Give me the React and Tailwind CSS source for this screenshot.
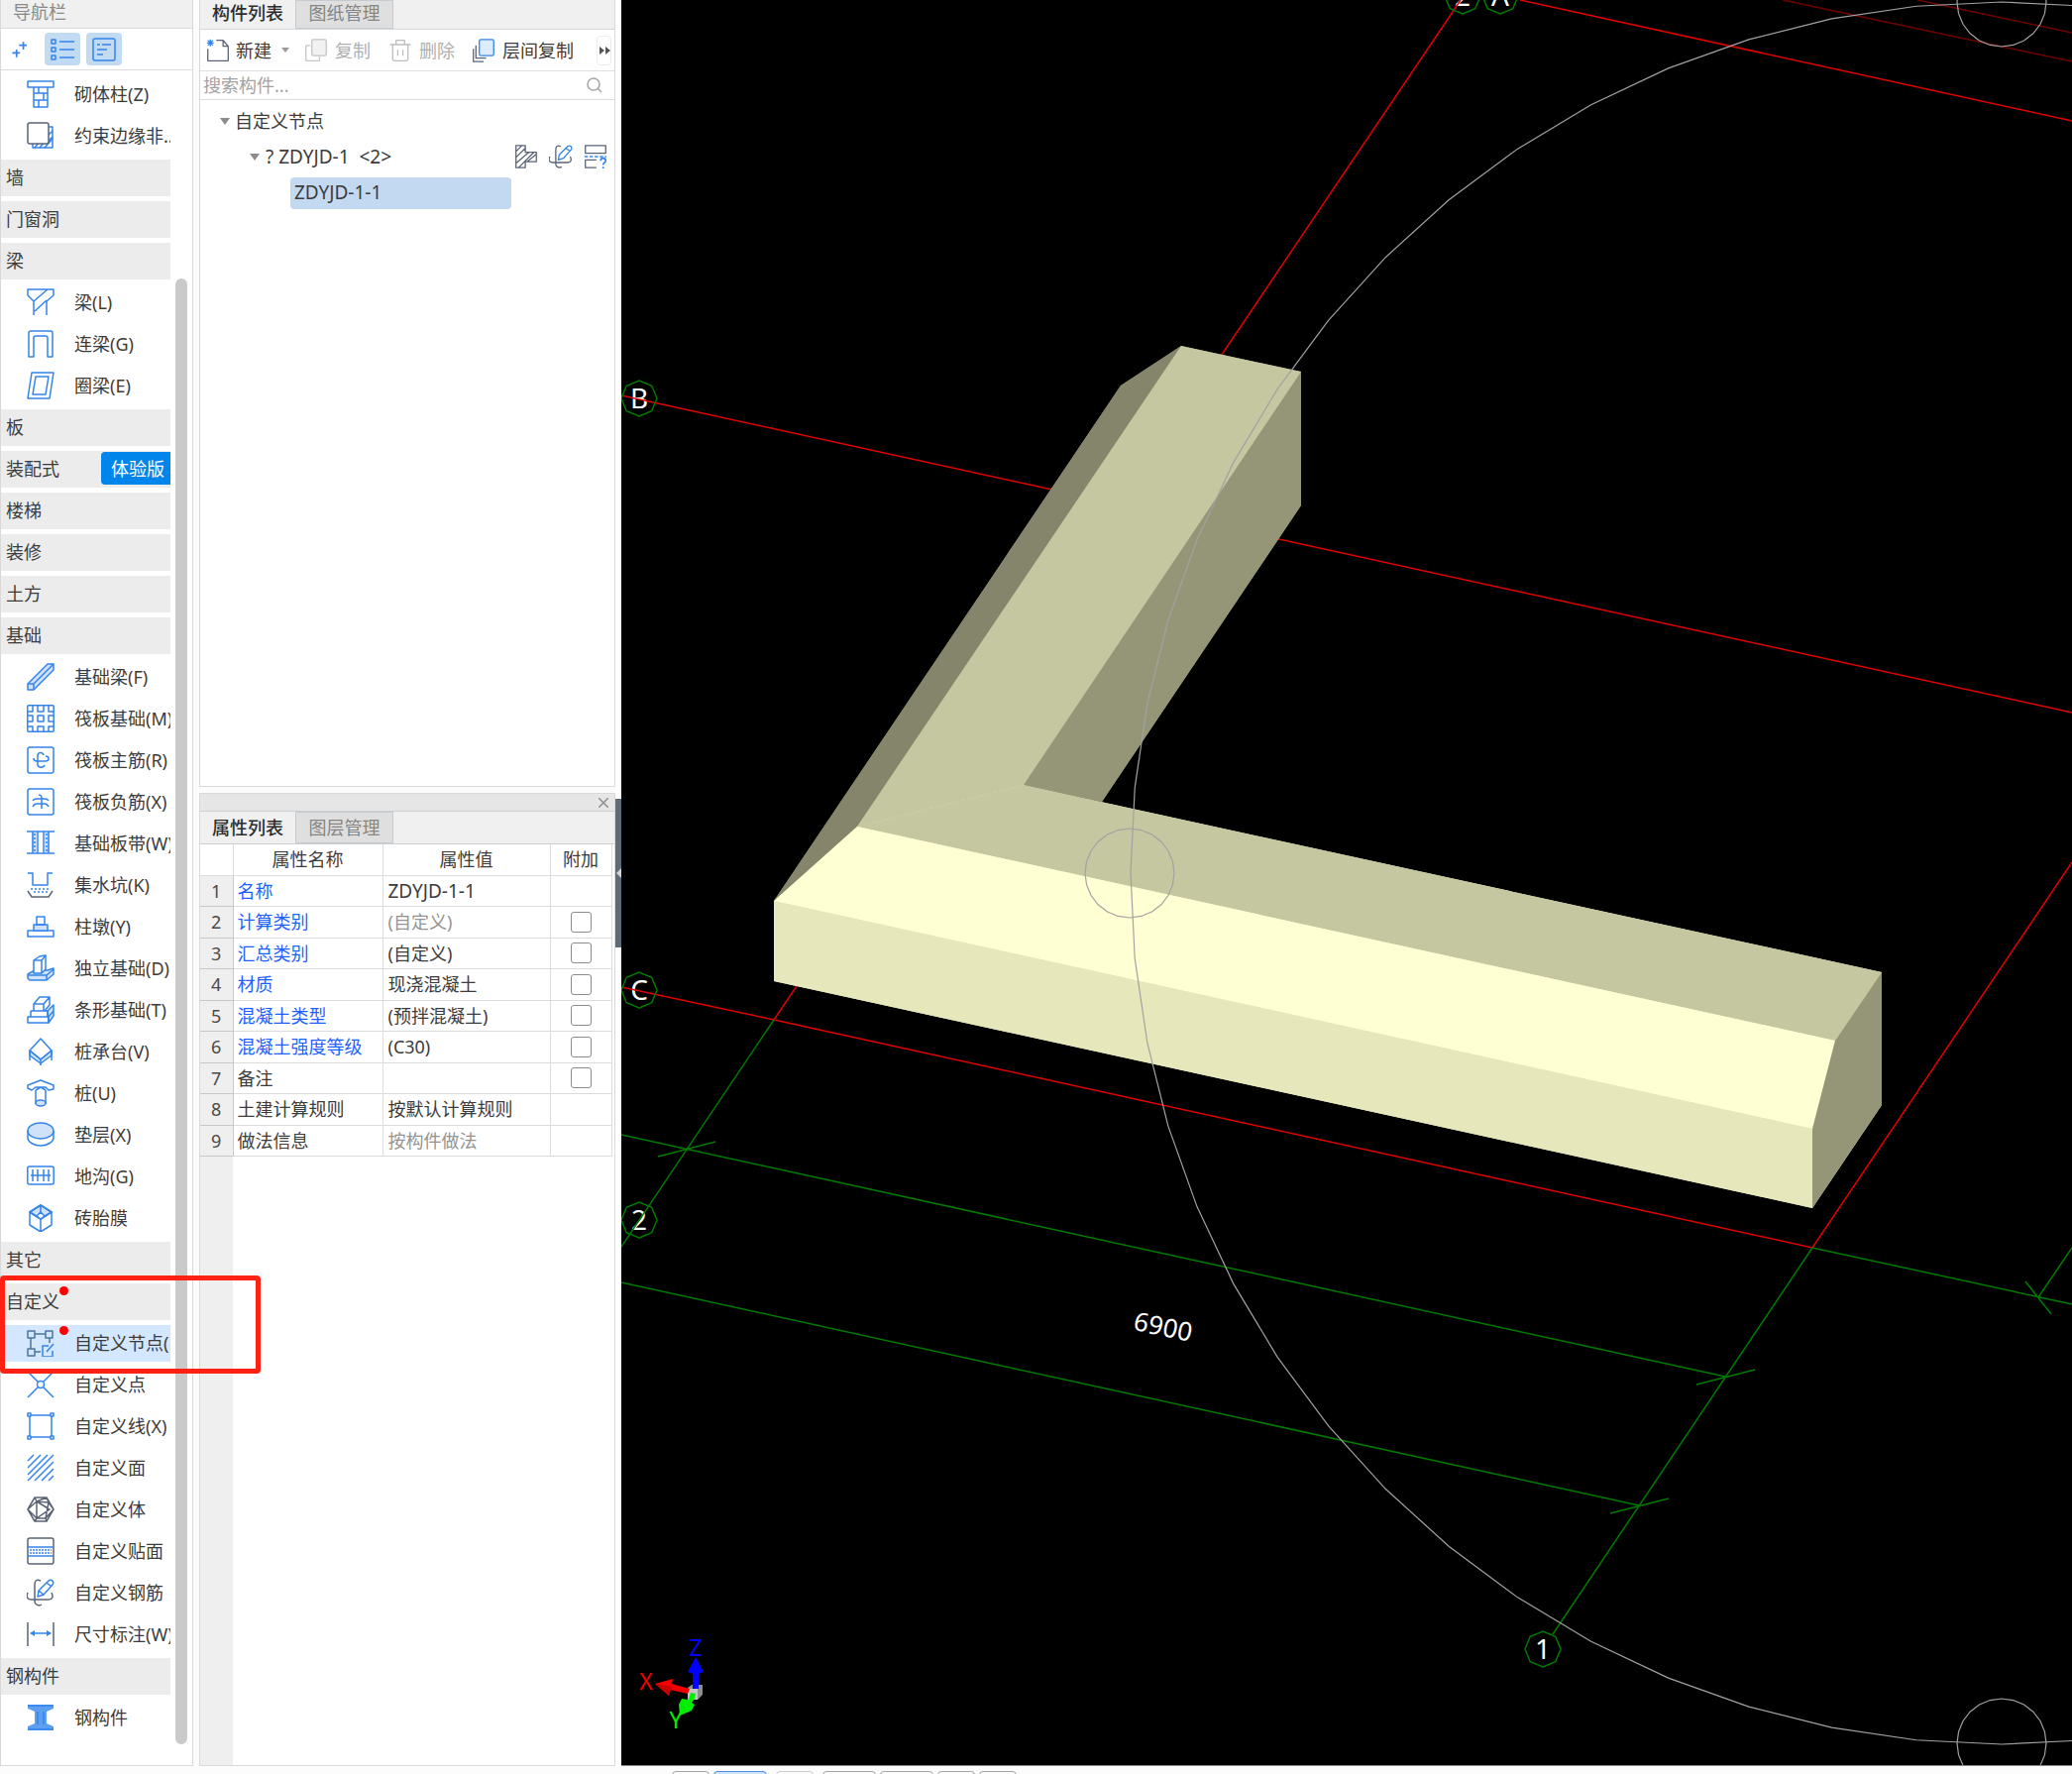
import React from 'react';

const BLUE = '#3484ea';
const DARK = '#5a6475';
const PALE = '#cfe2fa';

function Icon({ children, color = BLUE, className = 'w-7 h-7' }) {
  return (
    <svg
      viewBox="0 0 28 28"
      className={`${className} shrink-0`}
      fill="none"
      stroke={color}
      strokeWidth="1.5"
      strokeLinejoin="round"
      aria-hidden="true"
    >
      {children}
    </svg>
  );
}

const icons = {
  masonryColumn: (
    <Icon>
      <path d="M1 1h26v6H1zM7 7v20h14V7M7 13h14M7 20h14M12 7v6M17 13v7M12 20v7" />
    </Icon>
  ),
  edgeColumn: (
    <Icon>
      <path d="M21 5h5v21H6v-5" stroke={BLUE} />
      <path d="M8 26l4-5M13 26l4-5M18 26l8-9M21 14l5-5M21 20l5-5" />
      <rect x="1" y="1" width="21" height="21" rx="2" fill="white" stroke={DARK} />
    </Icon>
  ),
  beam: (
    <Icon>
      <path d="M7 27V13L1 7V1h26v6l-7 6v14M7 13L21 1M8 23l12-11" />
    </Icon>
  ),
  linkBeam: (
    <Icon>
      <path d="M2 27V3a2 2 0 0 1 2-2h20a2 2 0 0 1 2 2v24h-5V8a2 2 0 0 0-2-2H9a2 2 0 0 0-2 2v19z" />
    </Icon>
  ),
  ringBeam: (
    <Icon>
      <path d="M5 1h22l-4 26H1zM9 5h13l-3 18H6z" />
    </Icon>
  ),
  foundationBeam: (
    <Icon>
      <path d="M1 21L21 1h6v6L7 27H1z" fill={PALE} />
      <path d="M1 21h6v6M7 21L27 1" />
    </Icon>
  ),
  raft: (
    <Icon>
      <rect x="0.8" y="0.8" width="26.4" height="26.4" rx="1" />
      <path d="M1 7h5V1M11 1v6h6V1M22 1v6h5M1 11h5v6H1M11 11h6v6h-6zM27 11h-5v6h5M1 22h5v5M11 27v-5h6v5M22 27v-5h5" />
    </Icon>
  ),
  raftMain: (
    <Icon>
      <rect x="1" y="1" width="26" height="26" rx="2" />
      <path d="M17 9a3 3 0 0 0-6 1v9c1 3 6 3 7 0M7 12c0 2 1 3 3 3h9c4 0 4-5 0-5" />
    </Icon>
  ),
  raftNegative: (
    <Icon>
      <rect x="1" y="1" width="26" height="26" rx="2" />
      <path d="M6 13c1-2 2-2 4-2h8c2 0 3 0 4 2M6 19c1-2 2-3 4-3h8c2 0 3 1 4 3M12 7c3 0 3 2 3 5v9" />
    </Icon>
  ),
  slabBand: (
    <Icon>
      <path d="M5 3h5v20H5zM18 3h5v20h-5z" fill={PALE} stroke="none" />
      <path d="M0 2h28M0 24h28M6 2v22M11 2v22M17 2v22M22 2v22" />
      <path d="M8 4v20M20 4v20" strokeDasharray="2 2" />
    </Icon>
  ),
  sump: (
    <Icon>
      <path d="M1 2h5v12h15V2h5" />
      <path d="M4 18h20M7 21h14" strokeDasharray="2 2" />
      <path d="M1 20l4 6h17l4-6" stroke={DARK} />
    </Icon>
  ),
  pier: (
    <Icon>
      <path d="M1 18h26v6H1z" />
      <path d="M7 12h14v6H7z" fill={PALE} />
      <path d="M10 4h8v8h-8z" />
    </Icon>
  ),
  isolated: (
    <Icon>
      <path d="M1 20l7-4h13l6-2v6l-7 6H3l-2-2z" fill={PALE} />
      <path d="M1 21h19l7-6M20 21v5" />
      <path d="M7 6l6-4 6-1v14l-4 4H7z" fill="white" />
      <path d="M7 6h8v13M15 6l4-5" />
    </Icon>
  ),
  strip: (
    <Icon>
      <path d="M21 15l6-6v11l-5 7z" fill={PALE} />
      <path d="M1 21h21v6H1zM4 15h17v6M4 21v-6M7 15V8l6-7h10v8l-5 6M7 8h10v7M17 8l6-7M22 21l5-6" />
    </Icon>
  ),
  pileCap: (
    <Icon>
      <path d="M3 13l11 9 11-9v5l-11 8-11-8z" fill={PALE} />
      <path d="M14 1l11 12-11 9L3 13zM3 13v10M25 13v10M14 22v6" />
    </Icon>
  ),
  pile: (
    <Icon>
      <path d="M1 6l13-5 13 5v4l-5 1-3-3H9L5 11l-4-2zM9 11l5-3 5 3M9 11v14M19 11v14" />
      <ellipse cx="14" cy="24" rx="5" ry="3" fill={PALE} />
    </Icon>
  ),
  cushion: (
    <Icon>
      <ellipse cx="14" cy="10" rx="13" ry="8" fill={PALE} />
      <path d="M1 10v7c0 4 6 8 13 8s13-4 13-8v-7" />
    </Icon>
  ),
  trench: (
    <Icon>
      <rect x="0.8" y="4" width="26.4" height="18" rx="2" />
      <path d="M4 13h20M6 7v12M11 7v12M17 7v12M22 7v12" />
    </Icon>
  ),
  brickMould: (
    <Icon>
      <path d="M3 8l11-7 11 7-11 7z" fill={PALE} />
      <path d="M14 1l11 7v13l-11 7-11-7V8zM3 8l11 7 11-7M14 15v13M14 1v7" />
      <path d="M10 12l4-4 4 4-4 3z" fill="white" />
    </Icon>
  ),
  customNode: (
    <Icon color="#4b769c">
      <path d="M1 2h7v7H1zM19 2h7v7h-7zM1 20h7v7H1zM8 5h11M4 9v11M23 9v5M8 23h6" />
      <path d="M22 17h-6v11h10v-6M20 23l7-8" stroke={BLUE} />
    </Icon>
  ),
  customPoint: (
    <Icon>
      <circle cx="14" cy="14" r="3.5" />
      <path d="M1 1l10.500 10.500M27 1L16.500 11.500M1 27l10.500-10.500M27 27L16.500 16.500" />
    </Icon>
  ),
  customLine: (
    <Icon>
      <path d="M3 3h22v22H3z" />
      <path d="M1 1h3v3H1zM24 1h3v3h-3zM1 24h3v3H1zM24 24h3v3h-3z" fill="white" />
    </Icon>
  ),
  customFace: (
    <Icon>
      <path d="M1 7l6-6M1 14L14 1M1 21L21 1M1 27L27 1M8 27L27 8M15 27l12-12M22 27l5-5" />
    </Icon>
  ),
  customBody: (
    <Icon color={DARK}>
      <path d="M8 2h12l7 12-7 12H8L1 14zM8 2L1 14l9-8 12 1 5 7M8 2l2 4v17l-2 3M20 2l2 5-3 16 1 3M10 23h9l8-9M10 6l13 8-13 9M20 2L10 6M1 14l9 9" />
    </Icon>
  ),
  customVeneer: (
    <Icon>
      <rect x="1" y="1" width="26" height="26" rx="2" stroke={DARK} />
      <path d="M1 10h26M1 19h26" />
      <path d="M3 13h22M3 16h22" strokeDasharray="2 1" />
    </Icon>
  ),
  customRebar: (
    <Icon color={DARK}>
      <path d="M14 2c-4-2-6 0-6 4v17c0 3 4 5 7 3M1 14c-2 5 0 7 4 7h17c4 0 5-3 3-7" />
      <path d="M11 18l1-6L22 2c3-2 6 1 4 4L17 16zM12 12l5 4M20 4l5 4" stroke={BLUE} fill="white" />
    </Icon>
  ),
  dimension: (
    <Icon>
      <path d="M1 2v24M27 2v24" stroke={DARK} />
      <path d="M4 13h20" />
      <path d="M3 13l5-3v6zM25 13l-5-3v6z" fill={BLUE} stroke="none" />
    </Icon>
  ),
  steel: (
    <Icon>
      <path d="M1 1h26v4l-7 3v12l7 3v4H1v-4l7-3V8L1 5z" fill="#5b9ff0" stroke="none" />
      <path d="M1 2h26M1 26h26M11 8v13M17 8v13" />
    </Icon>
  ),
};

const navRows = [
  { label: '砌体柱(Z)', icon: 'masonryColumn' },
  { label: '约束边缘非..', icon: 'edgeColumn' },
  { label: '墙', group: true },
  { label: '门窗洞', group: true },
  { label: '梁', group: true },
  { label: '梁(L)', icon: 'beam' },
  { label: '连梁(G)', icon: 'linkBeam' },
  { label: '圈梁(E)', icon: 'ringBeam' },
  { label: '板', group: true },
  { label: '装配式', group: true, tag: '体验版' },
  { label: '楼梯', group: true },
  { label: '装修', group: true },
  { label: '土方', group: true },
  { label: '基础', group: true },
  { label: '基础梁(F)', icon: 'foundationBeam' },
  { label: '筏板基础(M)', icon: 'raft' },
  { label: '筏板主筋(R)', icon: 'raftMain' },
  { label: '筏板负筋(X)', icon: 'raftNegative' },
  { label: '基础板带(W)', icon: 'slabBand' },
  { label: '集水坑(K)', icon: 'sump' },
  { label: '柱墩(Y)', icon: 'pier' },
  { label: '独立基础(D)', icon: 'isolated' },
  { label: '条形基础(T)', icon: 'strip' },
  { label: '桩承台(V)', icon: 'pileCap' },
  { label: '桩(U)', icon: 'pile' },
  { label: '垫层(X)', icon: 'cushion' },
  { label: '地沟(G)', icon: 'trench' },
  { label: '砖胎膜', icon: 'brickMould' },
  { label: '其它', group: true },
  { label: '自定义', group: true, dot: true },
  { label: '自定义节点(', icon: 'customNode', dot: true, selected: true },
  { label: '自定义点', icon: 'customPoint' },
  { label: '自定义线(X)', icon: 'customLine' },
  { label: '自定义面', icon: 'customFace' },
  { label: '自定义体', icon: 'customBody' },
  { label: '自定义贴面', icon: 'customVeneer' },
  { label: '自定义钢筋', icon: 'customRebar' },
  { label: '尺寸标注(W)', icon: 'dimension' },
  { label: '钢构件', group: true },
  { label: '钢构件', icon: 'steel' },
];

function NavRow({ row }) {
  if (row.group) {
    return (
      <li className="pt-[2px] pb-[3px]">
        <button type="button" className="relative flex h-[37px] w-full items-center bg-[#ececec] pb-[2px] pl-[5px] text-left">
          <span>{row.label}</span>
          {row.tag && (
            <span className="ml-auto flex h-[33px] items-center rounded-l-[4px] bg-[#0085ea] pl-[10px] pr-[6px] text-white">
              {row.tag}
            </span>
          )}
          {row.dot && <span className="absolute left-[59px] top-[3px] h-[9px] w-[9px] rounded-full bg-[#ff0000]" />}
        </button>
      </li>
    );
  }
  return (
    <li className="pt-[2px] pb-[3px]">
      <button
        type="button"
        className={`relative flex h-[37px] w-full items-center gap-5 pb-[2px] pl-[26px] text-left ${row.selected ? 'bg-[#d3e7ff]' : ''}`}
      >
        {icons[row.icon]}
        <span className="whitespace-nowrap">{row.label}</span>
        {row.dot && <span className="absolute left-[59px] top-[1px] h-[9px] w-[9px] rounded-full bg-[#ff0000]" />}
      </button>
    </li>
  );
}

function NavPanel() {
  return (
    <aside className="flex w-[195px] shrink-0 flex-col border-x border-b border-[#d9d9d9] bg-white">
      <h2 className="flex h-7 shrink-0 items-center bg-[#f0f0f0] pb-1 pl-3 text-[#8a8a8a]">导航栏</h2>
      <div className="flex h-[43px] shrink-0 items-center gap-[6px] border-y border-[#dcdcdc] pl-[8px]">
        <button type="button" aria-label="智能" className="flex h-[33px] w-[30px] items-center">
          <Icon className="h-6 w-6">
            <path d="M17 5v9M12 9h9M9 14v9M4 18h9" strokeWidth="2" />
          </Icon>
        </button>
        <button type="button" aria-label="列表" className="flex h-[33px] w-9 items-center justify-center rounded-[4px] bg-[#c3daf3]">
          <Icon>
            <path d="M3 4h4v4H3zM3 12h4v4H3zM3 20h4v4H3zM11 6h15M11 14h15M11 22h15" />
          </Icon>
        </button>
        <button type="button" aria-label="详情" className="flex h-[33px] w-9 items-center justify-center rounded-[4px] bg-[#c3daf3]">
          <Icon>
            <rect x="3" y="3" width="22" height="22" rx="2" />
            <path d="M7 9h3M12 9h9M7 14h10M7 19h6" />
          </Icon>
        </button>
      </div>
      <div className="flex min-h-0 flex-1">
        <ul className="w-[171px] overflow-hidden pt-1">
          {navRows.map((row, i) => (
            <NavRow key={i} row={row} />
          ))}
        </ul>
        <div className="ml-[5px] mt-[210px] mb-[21px] w-3 rounded-full bg-[#cacaca]" />
      </div>
    </aside>
  );
}

function Tabs({ items, className = '' }) {
  return (
    <div role="tablist" className="flex h-full">
      {items.map((label, i) => (
        <button
          key={label}
          role="tab"
          type="button"
          aria-selected={i === 0}
          className={`${className} ${
            i === 0
              ? 'w-[96px] bg-[#f0f0f0] font-medium text-[#2d2d2d]'
              : 'w-[99px] border border-[#c6cbd0] bg-[#dfdfdf] text-[#858585]'
          }`}
        >
          {label}
        </button>
      ))}
    </div>
  );
}

function CopyIcon({ back, front, fill }) {
  return (
    <Icon className="h-6 w-6" color={back}>
      <path d="M7 8H3a1 1 0 0 0-1 1v16a1 1 0 0 0 1 1h14a1 1 0 0 0 1-1v-4" />
      <rect x="9" y="1" width="17" height="19" rx="2" stroke={front} fill={fill} />
    </Icon>
  );
}

function Caret() {
  return <span className="h-0 w-0 border-x-[5px] border-t-[7px] border-x-transparent border-t-[#8c8c8c]" />;
}

function ComponentPanel() {
  return (
    <section className="flex min-h-0 flex-col border-x border-b border-[#d9d9d9] bg-white">
      <div className="h-[30px] shrink-0 border-b border-[#d4d7da] bg-[#f0f0f0] leading-[20px]">
        <Tabs items={['构件列表', '图纸管理']} className="pb-[3px]" />
      </div>
      <div className="flex h-[42px] shrink-0 items-center border-b border-[#e0e0e0] pl-[6px]">
        <button type="button" className="flex items-center gap-[6px]">
          <Icon className="h-6 w-6" color={DARK}>
            <path d="M12 2h8l6 7v17H2V12M20 2v7h6" />
            <path d="M1 5h8M5 1v8M2 2l6 6M8 2L2 8" stroke={BLUE} />
          </Icon>
          新建
        </button>
        <span className="ml-[10px] h-0 w-0 border-x-4 border-t-[5px] border-x-transparent border-t-[#9a9a9a]" />
        <button type="button" disabled className="ml-[15px] flex items-center gap-[7px] text-[#b0b0b0]">
          <CopyIcon back="#c4c4c4" front="#c4c4c4" fill="#f2f2f2" />
          复制
        </button>
        <button type="button" disabled className="ml-[18px] flex items-center gap-[7px] text-[#b0b0b0]">
          <Icon className="h-6 w-6" color="#bdbdbd">
            <path d="M2 7h24M9 7V2h10v5M5 7v17a2 2 0 0 0 2 2h14a2 2 0 0 0 2-2V7M11 13v7M17 13v7" />
          </Icon>
          删除
        </button>
        <button type="button" className="ml-[17px] flex items-center gap-[7px]">
          <Icon className="h-6 w-6" color={DARK}>
            <path d="M5 8v15h12M2 12v15h12" />
            <rect x="9" y="1" width="17" height="19" rx="2" stroke={BLUE} fill="#dcebfd" />
          </Icon>
          层间复制
        </button>
        <button
          type="button"
          aria-label="更多"
          className="ml-auto mr-[3px] flex h-[30px] w-[15px] items-center justify-center rounded-[4px] border border-[#ececec]"
        >
          <svg viewBox="0 0 12 8" className="h-2 w-3" fill="#555" aria-hidden="true">
            <path d="M1 0l5 4-5 4zM7 0l5 4-5 4z" />
          </svg>
        </button>
      </div>
      <label className="flex h-[29px] shrink-0 items-center border-b border-[#dcdcdc] pl-[3px] pr-3">
        <input
          type="text"
          aria-label="搜索构件"
          placeholder="搜索构件..."
          className="min-w-0 flex-1 bg-transparent outline-none placeholder:text-[#a3a3a3]"
        />
        <svg viewBox="0 0 16 16" className="h-4 w-4" fill="none" stroke="#a8a8a8" strokeWidth="1.6" aria-hidden="true">
          <circle cx="7" cy="7" r="6" />
          <path d="M11 11l4 4" />
        </svg>
      </label>
      <ul className="min-h-0 flex-1 pt-[3px]">
        <li>
          <div className="flex h-9 items-center gap-[5px] pl-5">
            <Caret />
            自定义节点
          </div>
          <ul>
            <li>
              <div className="flex h-9 items-center pl-[50px] pr-[7px]">
                <Caret />
                <span className="ml-[6px] whitespace-pre text-[19px]">? ZDYJD-1  &lt;2&gt;</span>
                <span className="ml-auto flex gap-[11px]">
                  <button type="button" aria-label="截面">
                    <Icon className="h-6 w-6" color={DARK}>
                      <path d="M2 1h11v8h13v11H13v7H2zM2 8l7-7M2 15L13 4M2 22L17 9M5 27L23 9M15 20l11-9" />
                    </Icon>
                  </button>
                  <button type="button" aria-label="编辑钢筋">
                    <Icon className="h-6 w-6" color={DARK}>
                      <path d="M14 2c-4-2-6 0-6 4v17c0 3 4 5 7 3M1 14c-2 5 0 7 4 7h17c4 0 5-3 3-7" />
                      <path d="M11 18l1-6L22 2c3-2 6 1 4 4L17 16zM20 4l5 4" stroke={BLUE} fill="white" />
                    </Icon>
                  </button>
                  <button type="button" aria-label="查看做法">
                    <Icon className="h-6 w-6" color={DARK}>
                      <path d="M2 1h24v9H2zM15 18H2v9h13" />
                      <path d="M1 14h26" stroke={BLUE} strokeDasharray="4 2" />
                      <path d="M20 19c0-4 6-4 6 0 0 2-3 2-3 5M23 26v2" stroke={BLUE} strokeWidth="2" />
                    </Icon>
                  </button>
                </span>
              </div>
              <ul className="pl-[91px] pt-[3px]">
                <li className="flex h-8 w-[223px] items-center rounded-[4px] bg-[#c3d9f1] pb-[2px] pl-1 text-[19px]">ZDYJD-1-1</li>
              </ul>
            </li>
          </ul>
        </li>
      </ul>
    </section>
  );
}

const properties = [
  { name: '名称', value: 'ZDYJD-1-1', link: true, latin: true },
  { name: '计算类别', value: '(自定义)', link: true, muted: true, check: true },
  { name: '汇总类别', value: '(自定义)', link: true, check: true },
  { name: '材质', value: '现浇混凝土', link: true, check: true },
  { name: '混凝土类型', value: '(预拌混凝土)', link: true, check: true },
  { name: '混凝土强度等级', value: '(C30)', link: true, check: true },
  { name: '备注', value: '', check: true },
  { name: '土建计算规则', value: '按默认计算规则' },
  { name: '做法信息', value: '按构件做法', muted: true },
];

function PropertyPanel() {
  return (
    <section className="flex min-h-0 flex-col border border-[#d9d9d9] bg-white">
      <div className="flex h-[17px] shrink-0 items-center justify-end bg-[#e6e6e6] pr-[6px]">
        <button type="button" aria-label="关闭">
          <svg viewBox="0 0 10 10" className="h-[10px] w-[10px]" stroke="#8e8e8e" strokeWidth="1.5" aria-hidden="true">
            <path d="M0 0l10 10M10 0L0 10" />
          </svg>
        </button>
      </div>
      <div className="h-[34px] shrink-0 border-t border-b border-[#ccd0d4] bg-[#f0f0f0]">
        <Tabs items={['属性列表', '图层管理']} />
      </div>
      <table className="h-[315px] w-[415px] table-fixed border-collapse leading-[24px]">
        <colgroup>
          <col className="w-[33px]" />
          <col className="w-[151px]" />
          <col className="w-[169px]" />
          <col className="w-[62px]" />
        </colgroup>
        <thead>
          <tr className="h-[31px] text-center">
            <th className="border-b border-r border-[#dcdcdc]" aria-label="序号" />
            <th scope="col" className="border-b border-r border-[#dcdcdc] font-normal">属性名称</th>
            <th scope="col" className="border-b border-r border-[#dcdcdc] font-normal">属性值</th>
            <th scope="col" className="border-b border-r border-[#dcdcdc] font-normal">附加</th>
          </tr>
        </thead>
        <tbody>
          {properties.map((p, i) => (
            <tr key={p.name} className="h-[31px]">
              <td className="border-b border-r border-[#c8c8c8] bg-[#efefef] text-center text-[#4a4a4a]">{i + 1}</td>
              <td className={`border-b border-r border-[#dcdcdc] pl-1 ${p.link ? 'text-[#1d5fff]' : ''}`}>{p.name}</td>
              <td
                className={`border-b border-r border-[#dcdcdc] pl-[5px] ${p.muted ? 'text-[#949494]' : ''} ${p.latin ? 'text-[19px]' : ''}`}
              >
                {p.value}
              </td>
              <td className="border-b border-r border-[#dcdcdc]">
                {p.check && (
                  <input
                    type="checkbox"
                    aria-label={`附加 ${p.name}`}
                    className="mx-auto block h-[21px] w-[21px] appearance-none rounded-[3px] border border-[#8c8c8c] bg-white"
                  />
                )}
              </td>
            </tr>
          ))}
        </tbody>
      </table>
      <div className="w-[33px] flex-1 bg-[#efefef]" />
    </section>
  );
}

// Closed polygon used for the orbit gizmo and its handles
function ring(cx, cy, r, n) {
  return Array.from({ length: n }, (_, i) => {
    const a = (i / n) * Math.PI * 2;
    return `${cx + r * Math.sin(a)},${cy + r * Math.cos(a)}`;
  }).join(' ');
}

const bubbles = [
  { x: 1476, y: -4, text: '2' },
  { x: 1514, y: -4, text: 'A' },
  { x: 645, y: 402, text: 'B' },
  { x: 645, y: 999, text: 'C' },
  { x: 645, y: 1231, text: '2' },
  { x: 1557, y: 1664, text: '1' },
];

function Viewport() {
  return (
    <div className="min-w-0 flex-1 border-b border-[#8a8a8a] bg-black">
      <svg viewBox="627 0 1464 1781" preserveAspectRatio="xMinYMin slice" className="h-full w-full" role="img" aria-label="三维视图">
        <g fill="#ffffff" fontFamily="'Noto Sans', sans-serif" fontSize="28" textAnchor="middle">
          {bubbles.map((b) => (
            <text key={`${b.x}-${b.y}`} x={b.x} y={b.y + 10}>{b.text}</text>
          ))}
          <text x="1174" y="1348" fontSize="26" transform="rotate(12 1174 1338)">6900</text>
        </g>

        <g stroke="#e00000" strokeWidth="1.5">
          <path d="M627 399L2091 719" />
          <path d="M627 996L781 1029L1829 1259L2091 870" fill="none" />
          <path d="M1474 0L781 1029" />
          <path d="M1534 0L2091 122" />
          <path d="M1799 0L2091 62M1935 0L2091 33" stroke="#700000" />
        </g>

        <g stroke="#007a00" strokeWidth="1.5" fill="none">
          <path d="M781 1029L627 1258" />
          <path d="M627 1145L1741 1389M664 1167L722 1152M1712 1397L1771 1382" />
          <path d="M627 1294L1654 1519M1625 1527L1684 1512" />
          <path d="M1829 1259L1567 1649" />
          <path d="M1829 1259L2091 1316M2091 1259L2057 1309M2044 1293L2070 1326" />
          {bubbles.map((b) => (
            <polygon key={`${b.x}-${b.y}`} points={ring(b.x, b.y, 18, 8)} />
          ))}
        </g>

        {/* solid: backing shapes first so the faces meet without a seam */}
        <g>
          <polygon points="1131,389 1192,349 1313,375 1313,510 1112,809 1033,792 865,834 781,909" fill="#959677" />
          <polygon points="865,834 1033,792 1899,981 1899,1115 1829,1219 781,990 781,909" fill="#e6e7bb" />
          <polygon points="1131,389 1192,349 865,834 781,909" fill="#85856b" />
          <polygon points="1313,375 1313,510 1112,809 1033,792" fill="#959677" />
          <polygon points="1192,349 1313,375 1033,792 865,834" fill="#c5c7a0" />
          <polygon points="865,834 1033,792 1899,981 1852,1050" fill="#c5c7a0" />
          <polygon points="865,834 1852,1050 1829,1139 781,909" fill="#feffd2" />
          <polygon points="781,909 1829,1139 1829,1219 781,990" fill="#e6e7bb" />
          <polygon points="1899,981 1899,1115 1829,1219 1829,1139 1852,1050" fill="#959677" />
          <path d="M865 834L1033 792" stroke="#d3d5a9" strokeDasharray="2 1" />
        </g>

        <g stroke="#a2a2a2" strokeWidth="1.2" fill="none">
          <polygon points={ring(2020, 881, 879, 64)} />
          <polygon points={ring(1140, 881, 45, 24)} />
          <polygon points={ring(2020, 1759, 45, 24)} />
          <polygon points={ring(2020, 2, 45, 24)} />
        </g>

        <g>
          <path d="M694 1703l4-3h11v10l-5 5h-10z" fill="#8e8e8e" />
          <path d="M694 1704h10v11h-10z" fill="#c4c4c4" />
          <path d="M661 1699l18-5-1 5 18 5-2 5-18-4-1 6z" fill="#f40000" />
          <path d="M661 1699l17 3-3 9z" fill="#c80000" />
          <path d="M702 1672l8 15-5 2v15h-6v-15l-5-2z" fill="#0000ff" />
          <path d="M697 1708l5 1-1 5-3 4 3 2-3 6-12 5-1-11 3-6 7 1z" fill="#00ee00" />
          <g fontFamily="'Noto Sans', sans-serif" fontSize="23" textAnchor="middle">
            <text x="702" y="1671" fill="#0000ff">Z</text>
            <text x="652" y="1705" fill="#f40000">X</text>
            <text x="682" y="1744" fill="#00ee00">Y</text>
          </g>
        </g>
      </svg>
    </div>
  );
}

function BottomBar() {
  return (
    <footer className="flex h-2 shrink-0 overflow-hidden bg-[#fcfcfc] pl-[678px] pt-[5px]">
      <button type="button" aria-label="视图一" className="h-6 w-[38px] shrink-0 rounded-[4px] border border-[#a5a5a5]" />
      <button type="button" aria-label="视图二" className="ml-1 h-6 w-[54px] shrink-0 rounded-[4px] border border-[#4a8ee6] bg-[#cfe2fa]" />
      <button type="button" aria-label="视图三" className="ml-[9px] h-6 w-[38px] shrink-0 rounded-[4px] border border-[#cccccc]" />
      <button type="button" aria-label="视图四" className="ml-[9px] h-6 w-[54px] shrink-0 rounded-[4px] border border-[#a5a5a5]" />
      <button type="button" aria-label="视图五" className="ml-1 h-6 w-[54px] shrink-0 rounded-[4px] border border-[#a5a5a5]" />
      <button type="button" aria-label="视图六" className="ml-1 h-6 w-[38px] shrink-0 rounded-[4px] border border-[#a5a5a5]" />
      <button type="button" aria-label="视图七" className="ml-1 h-6 w-[38px] shrink-0 rounded-[4px] border border-[#a5a5a5]" />
    </footer>
  );
}

export default function App() {
  return (
    <div className="flex h-screen flex-col overflow-hidden bg-[#fcfcfc] font-['Noto_Sans','Noto_Sans_CJK_SC',sans-serif] text-[18px] leading-[24px] text-[#3c3c3c]">
      <main className="relative flex min-h-0 flex-1">
        <NavPanel />
        <div className="ml-[6px] grid w-[420px] shrink-0 grid-rows-[794fr_982fr] gap-[6px]">
          <ComponentPanel />
          <PropertyPanel />
        </div>
        <div className="flex w-[6px] shrink-0 items-center bg-white pb-5">
          <button type="button" aria-label="折叠面板" className="flex h-[150px] w-full items-center justify-end bg-[#5e6b78]">
            <span className="h-0 w-0 border-y-[5px] border-r-[5px] border-y-transparent border-r-[#d0d4d8]" />
          </button>
        </div>
        <Viewport />
        <div className="pointer-events-none absolute left-0 top-[1287px] h-[99px] w-[263px] rounded-[4px] border-[5px] border-[#ff2113]" />
      </main>
      <BottomBar />
    </div>
  );
}
